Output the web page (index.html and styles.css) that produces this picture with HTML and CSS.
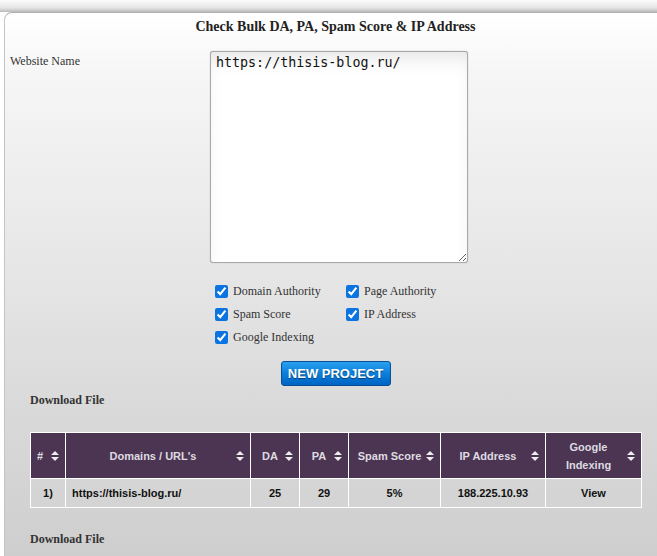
FILE: index.html
```html
<!DOCTYPE html>
<html>
<head>
<meta charset="utf-8">
<link rel="stylesheet" href="styles.css">
</head>
<body>
<div class="card">
  <h1 class="title">Check Bulk DA, PA, Spam Score &amp; IP Address</h1>
  <div class="form-row">
    <label class="label">Website Name</label>
    <textarea class="urls" spellcheck="true">https://thisis-blog.ru/</textarea>
  </div>
  <div class="checks">
    <label class="chk"><input type="checkbox" checked> Domain Authority</label>
    <label class="chk"><input type="checkbox" checked> Page Authority</label>
    <label class="chk"><input type="checkbox" checked> Spam Score</label>
    <label class="chk"><input type="checkbox" checked> IP Address</label>
    <label class="chk"><input type="checkbox" checked> Google Indexing</label>
  </div>
  <div class="btn-row"><button class="btn">NEW PROJECT</button></div>
  <div class="download">Download File</div>
  <table class="results">
    <colgroup>
      <col style="width:35px"><col style="width:185px"><col style="width:49px"><col style="width:49px"><col style="width:92px"><col style="width:105px"><col style="width:96px">
    </colgroup>
    <thead>
      <tr>
        <th class="left">#<svg class="sort" viewBox="0 0 8 10"><path d="M4 0L8 4H0Z M0 6H8L4 10Z"/></svg></th>
        <th>Domains / URL's<svg class="sort" viewBox="0 0 8 10"><path d="M4 0L8 4H0Z M0 6H8L4 10Z"/></svg></th>
        <th>DA<svg class="sort" viewBox="0 0 8 10"><path d="M4 0L8 4H0Z M0 6H8L4 10Z"/></svg></th>
        <th>PA<svg class="sort" viewBox="0 0 8 10"><path d="M4 0L8 4H0Z M0 6H8L4 10Z"/></svg></th>
        <th class="nowrap">Spam Score<svg class="sort" viewBox="0 0 8 10"><path d="M4 0L8 4H0Z M0 6H8L4 10Z"/></svg></th>
        <th>IP Address<svg class="sort" viewBox="0 0 8 10"><path d="M4 0L8 4H0Z M0 6H8L4 10Z"/></svg></th>
        <th>Google Indexing<svg class="sort" viewBox="0 0 8 10"><path d="M4 0L8 4H0Z M0 6H8L4 10Z"/></svg></th>
      </tr>
    </thead>
    <tbody>
      <tr>
        <td>1)</td>
        <td class="url">https://thisis-blog.ru/</td>
        <td>25</td>
        <td>29</td>
        <td>5%</td>
        <td>188.225.10.93</td>
        <td>View</td>
      </tr>
    </tbody>
  </table>
  <div class="download second">Download File</div>
</div>
</body>
</html>
```
FILE: styles.css
```css
html, body {
  margin: 0;
  padding: 0;
  overflow: hidden;
}
body {
  background: linear-gradient(#fcfcfc 0px, #e4e4e4 8px, #b9b9b9 12px, #fff 12px);
  font-family: "Liberation Serif", serif;
  color: #333;
  width: 657px;
  height: 556px;
}
.card {
  margin: 12px 0 0 4px;
  width: 662px;
  height: 560px;
  box-sizing: border-box;
  border-top: 1px solid #b0b0b0;
  border-left: 1px solid #c4c4c4;
  border-top-left-radius: 8px;
  background: linear-gradient(#ffffff 0px, #f6f6f6 60px, #e6e6e6 260px, #d9d9d9 400px, #cdcdcd 560px);
}
.title {
  margin: 0;
  padding-top: 6px;
  height: 25px;
  font-size: 14px;
  font-weight: bold;
  text-align: center;
  color: #222;
  line-height: 16px;
}
.form-row {
  display: flex;
  margin-top: 7px;
}
.label {
  width: 200px;
  padding-left: 5px;
  font-size: 12px;
  line-height: 16px;
  margin-top: 2px;
  color: #333;
}
.urls {
  width: 258px;
  height: 212px;
  box-sizing: border-box;
  border: 1px solid #a9a9a9;
  border-radius: 3px;
  box-shadow: inset 0 12px 18px -6px #e6e6e6, 0 0 1px #999;
  padding: 3px 5px;
  font-family: "DejaVu Sans Mono", monospace;
  font-size: 13.33px;
  line-height: 16px;
  color: #111;
  background: #fff;
  margin-left: 0;
  resize: both;
}
.checks {
  display: grid;
  grid-template-columns: 131px 130px;
  margin: 20px 0 0 209px;
  row-gap: 7px;
}
.chk {
  display: flex;
  align-items: center;
  font-size: 12px;
  line-height: 16px;
  color: #333;
  gap: 5px;
}
.chk input {
  margin: 0 0 0 1px;
  width: 13px;
  height: 13px;
  accent-color: #0b74e0;
}
.btn-row {
  display: flex;
  justify-content: center;
  margin-top: 16px;
  padding-right: 4px;
}
.btn {
  width: 110px;
  height: 25px;
  border: 1px solid #0a4e92;
  border-radius: 3px;
  background: linear-gradient(#2aa0ef, #0a80dc 50%, #0062c4);
  color: #fff;
  font-family: "Liberation Sans", sans-serif;
  font-weight: bold;
  font-size: 13px;
  text-shadow: 0 1px 1px rgba(0,0,0,0.45);
  padding: 0;
  margin-left: 4px;
}
.download {
  margin: 6px 0 0 25px;
  font-size: 12px;
  font-weight: bold;
  color: #333;
  line-height: 16px;
}
.download.second {
  margin-top: 23px;
}
.results {
  margin: 24px 0 0 25px;
  border-collapse: collapse;
  table-layout: fixed;
  width: 611px;
  font-family: "Liberation Sans", sans-serif;
  font-size: 11px;
  font-weight: bold;
}
.results th, .results td {
  border: 1px solid #fff;
}
.results th {
  position: relative;
  background: #4c3553;
  color: #dedbe0;
  height: 46px;
  box-sizing: border-box;
  padding: 0 16px 0 6px;
  text-align: center;
  line-height: 18px;
}
.results th.left {
  text-align: left;
}
.results th.nowrap {
  white-space: nowrap;
}
.sort {
  position: absolute;
  right: 6px;
  top: 18px;
  width: 8px;
  height: 10px;
  fill: #ececec;
}
.results td {
  height: 29px;
  box-sizing: border-box;
  text-align: center;
  color: #111;
  padding: 0 4px;
  background: rgba(214,214,214,0.5);
}
.results td.url {
  text-align: left;
  padding-left: 6px;
}
```
